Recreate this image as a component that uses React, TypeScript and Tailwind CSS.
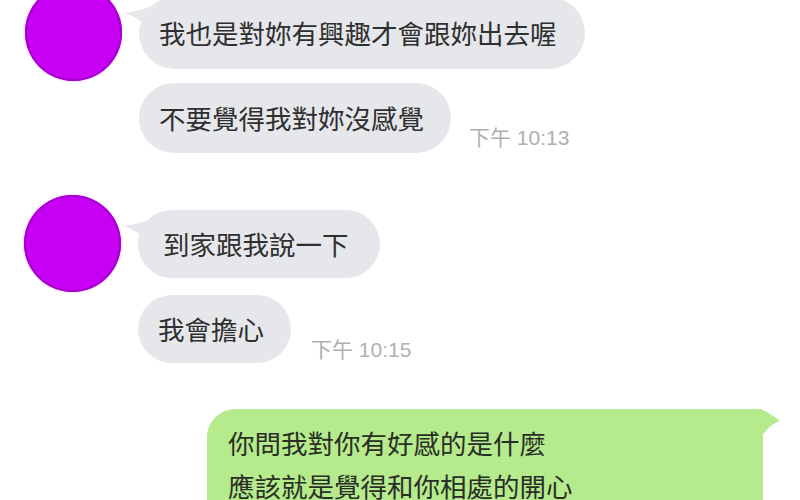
const font = "font-['Noto_Sans_CJK_TC','Noto_Sans_CJK_SC',sans-serif]";

type BubbleProps = {
    text: string;
    tail?: boolean;
    className?: string;
};

const GreyBubble = ({ text, tail, className }: BubbleProps) => (
    <div className={`relative flex items-center rounded-full bg-[#e6e7eb] text-[26.5px] text-[#2f2f2f] ${className ?? ''}`}>
        {tail && (
            <svg className="absolute left-[-14px] top-[6px]" width="30" height="26" viewBox="0 0 30 26">
                <path d="M30 2 Q14 8 0 10 Q12 14 22 24 Z" fill="#e6e7eb" />
            </svg>
        )}
        <span className="relative">{text}</span>
    </div>
);

const Stamp = ({ time, className }: { time: string; className?: string }) => (
    <div className={`font-['Liberation_Sans','Noto_Sans_CJK_TC',sans-serif] text-[21px] leading-none text-[#b0b0b0] whitespace-nowrap ${className ?? ''}`}>
        下午 {time}
    </div>
);

const Avatar = () => (
    <div className="w-[97px] h-[97px] shrink-0 rounded-full bg-[#c700f3] shadow-[inset_0_0_0_2px_#a600cc,0_0_3px_#f0b8ff]" />
);

export default function App() {
    return (
        <div className={`w-[800px] h-[500px] overflow-hidden bg-white ${font}`}>
            <div className="-mt-[16px] flex items-start">
                <div className="ml-[25px]">
                    <Avatar />
                </div>
                <div className="ml-[17px] mt-[13px] flex flex-col items-start gap-[14px]">
                    <GreyBubble text="我也是對妳有興趣才會跟妳出去喔" tail className="h-[72px] pl-[20px] pr-[28px]" />
                    <div className="flex items-end gap-[18px]">
                        <GreyBubble text="不要覺得我對妳沒感覺" className="h-[70px] pl-[20px] pr-[27px]" />
                        <Stamp time="10:13" className="mb-[5px]" />
                    </div>
                </div>
            </div>

            <div className="mt-[42px] flex items-start">
                <div className="ml-[24px]">
                    <Avatar />
                </div>
                <div className="ml-[17px] mt-[15px] flex flex-col items-start gap-[17px]">
                    <GreyBubble text="到家跟我說一下" tail className="h-[68px] pl-[25px] pr-[31px]" />
                    <div className="flex items-end gap-[20px]">
                        <GreyBubble text="我會擔心" className="h-[68px] pl-[20px] pr-[27px]" />
                        <Stamp time="10:15" className="mb-[3px]" />
                    </div>
                </div>
            </div>

            <div className="mt-[46px] ml-[207px] relative w-[556px]">
                <svg className="absolute right-[-18px] top-[0px]" width="50" height="28" viewBox="0 0 50 28">
                    <path d="M0 0 L30 0 Q42 6 49 12 Q40 14 30 28 L0 28 Z" fill="#b5ea8d" />
                </svg>
                <div className="relative rounded-[28px] bg-[#b5ea8d] pl-[21px] pt-[12px] pb-[30px] text-[26.5px] leading-[43px] text-[#2a2f26]">
                    <div>你問我對你有好感的是什麼</div>
                    <div>應該就是覺得和你相處的開心</div>
                </div>
            </div>
        </div>
    );
}
